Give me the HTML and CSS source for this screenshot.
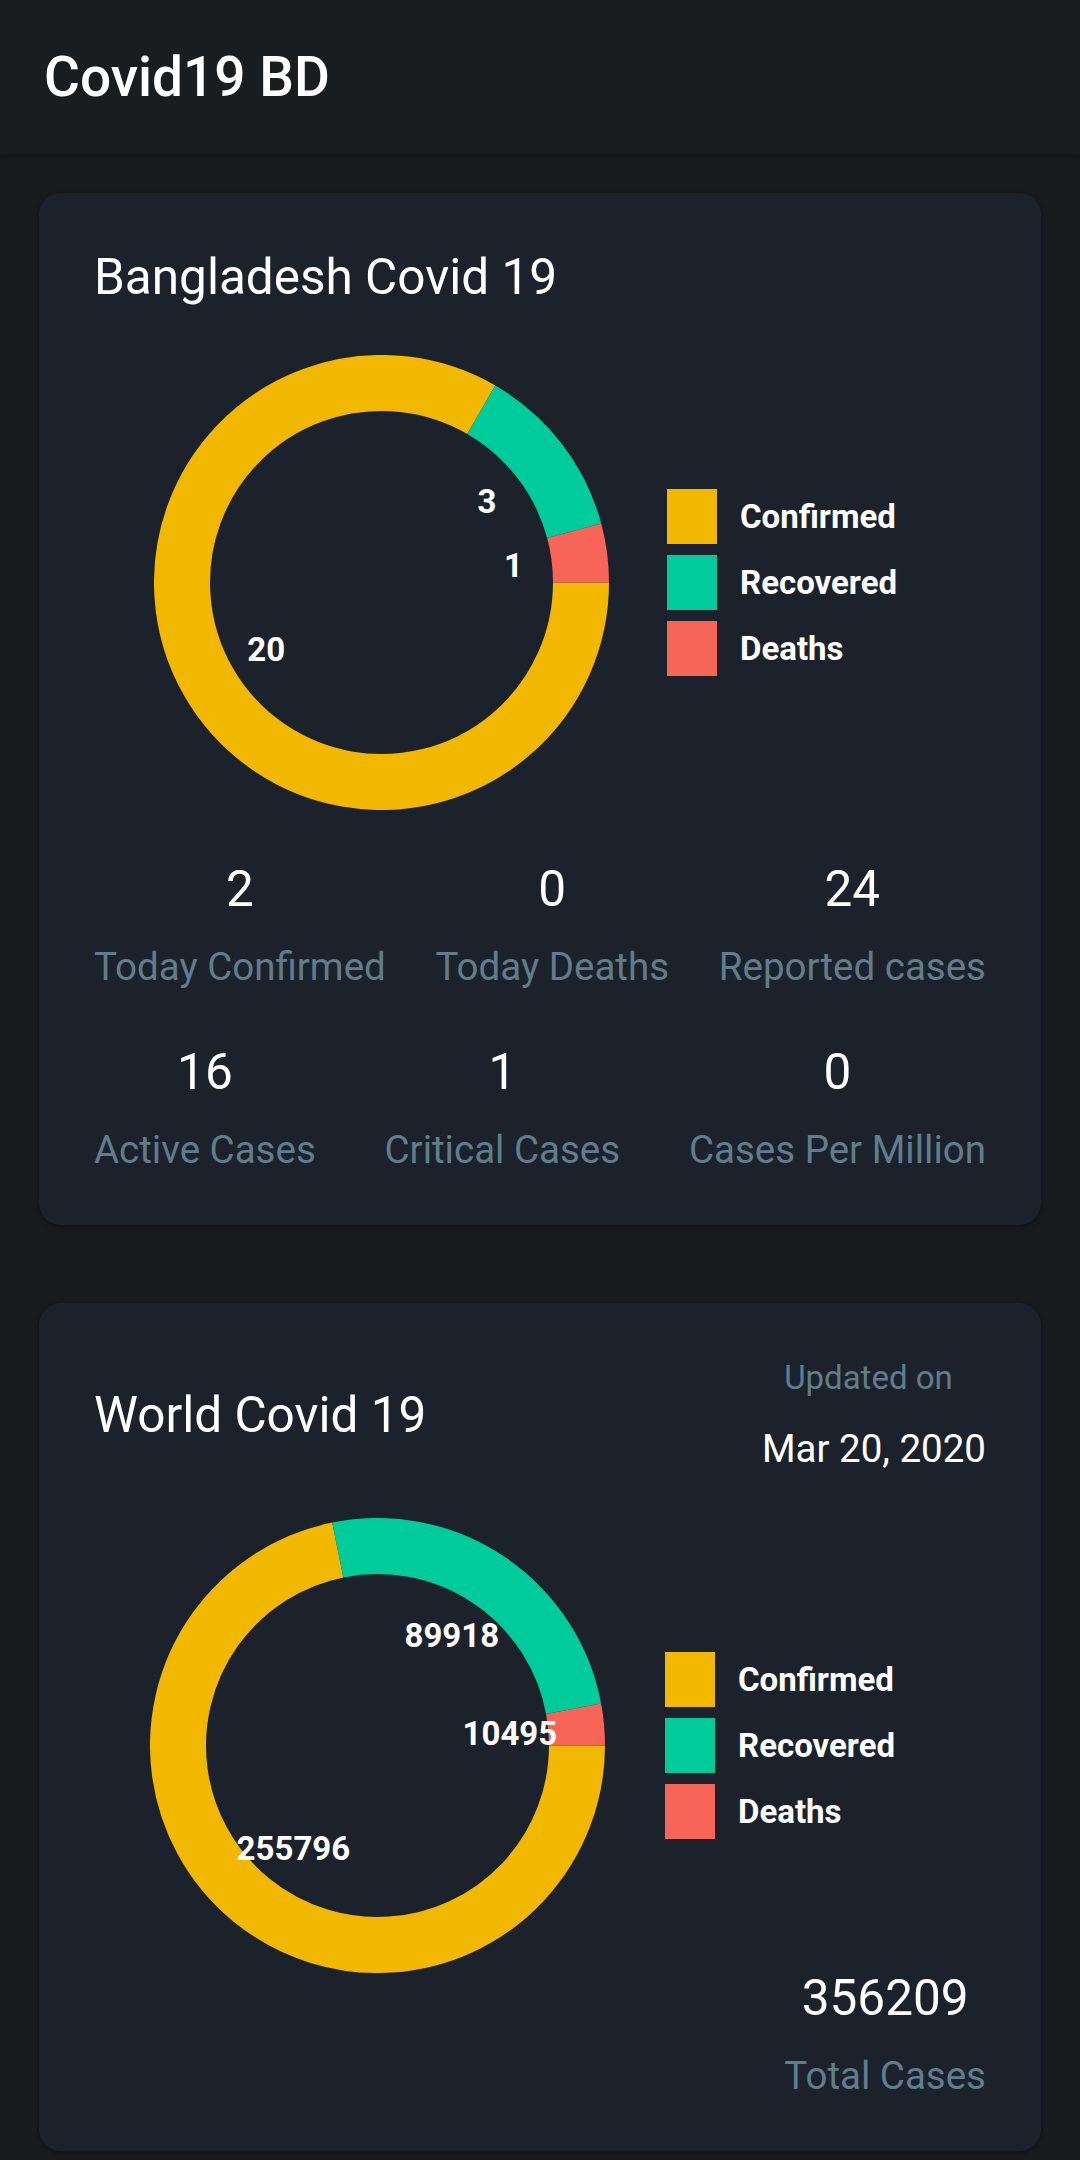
FILE: index.html
```html
<!DOCTYPE html>
<html lang="en">
<head>
<meta charset="utf-8">
<title>Covid19 BD</title>
<link rel="stylesheet" href="styles.css">
</head>
<body>
<header class="appbar">
  <h1 class="appbar-title">Covid19 BD</h1>
</header>
<main class="content">
  <section class="card">
    <h2 class="card-title">Bangladesh Covid 19</h2>
    <div class="chart-row">
      <svg class="donut" viewBox="0 0 455 455" width="455" height="455">
        <path class="seg seg-confirmed" d="M427 227.5 A199.5 199.5 0 1 1 327.25 54.73"/>
        <path class="seg seg-recovered" d="M327.25 54.73 A199.5 199.5 0 0 1 420.2 175.87"/>
        <path class="seg seg-deaths" d="M420.2 175.87 A199.5 199.5 0 0 1 427 227.5"/>
        <text class="seg-label" x="112.3" y="294">20</text>
        <text class="seg-label" x="333" y="146.5">3</text>
        <text class="seg-label" x="359.4" y="210.1">1</text>
      </svg>
      <ul class="legend">
        <li class="legend-item"><span class="swatch swatch-confirmed"></span>Confirmed</li>
        <li class="legend-item"><span class="swatch swatch-recovered"></span>Recovered</li>
        <li class="legend-item"><span class="swatch swatch-deaths"></span>Deaths</li>
      </ul>
    </div>
    <div class="stats">
      <div class="stat-row stat-row-first">
        <div class="stat"><span class="stat-value">2</span><span class="stat-label">Today Confirmed</span></div>
        <div class="stat"><span class="stat-value">0</span><span class="stat-label">Today Deaths</span></div>
        <div class="stat"><span class="stat-value">24</span><span class="stat-label">Reported cases</span></div>
      </div>
      <div class="stat-row">
        <div class="stat"><span class="stat-value">16</span><span class="stat-label">Active Cases</span></div>
        <div class="stat"><span class="stat-value">1</span><span class="stat-label">Critical Cases</span></div>
        <div class="stat"><span class="stat-value">0</span><span class="stat-label">Cases Per Million</span></div>
      </div>
    </div>
  </section>

  <section class="card">
    <div class="card-head">
      <h2 class="card-title">World Covid 19</h2>
      <div class="updated">
        <span class="updated-label">Updated on</span>
        <span class="updated-date">Mar 20, 2020</span>
      </div>
    </div>
    <div class="chart-row chart-row-world">
      <svg class="donut" viewBox="0 0 455 455" width="455" height="455">
        <path class="seg seg-confirmed" d="M427 227.5 A199.5 199.5 0 1 1 187.78 31.99"/>
        <path class="seg seg-recovered" d="M187.78 31.99 A199.5 199.5 0 0 1 423.59 190.77"/>
        <path class="seg seg-deaths" d="M423.59 190.77 A199.5 199.5 0 0 1 427 227.5"/>
        <text class="seg-label" x="143.4" y="330.5">255796</text>
        <text class="seg-label" x="301.8" y="117.2">89918</text>
        <text class="seg-label" x="359.9" y="215.2">10495</text>
      </svg>
      <ul class="legend">
        <li class="legend-item"><span class="swatch swatch-confirmed"></span>Confirmed</li>
        <li class="legend-item"><span class="swatch swatch-recovered"></span>Recovered</li>
        <li class="legend-item"><span class="swatch swatch-deaths"></span>Deaths</li>
      </ul>
    </div>
    <div class="total">
      <span class="stat-value">356209</span>
      <span class="stat-label">Total Cases</span>
    </div>
  </section>
</main>
</body>
</html>
```
FILE: styles.css
```css
* {
  box-sizing: border-box;
}

html, body {
  margin: 0;
  padding: 0;
}

body {
  background: #181b1e;
  color: #ffffff;
  font-family: Roboto, "Noto Sans", "Liberation Sans", sans-serif;
  width: 1080px;
  min-height: 2160px;
}

.appbar {
  height: 154px;
  background: #1a1d20;
  display: flex;
  align-items: center;
  padding-left: 44px;
  box-shadow: 0 2px 4px rgba(0, 0, 0, 0.25);
  position: relative;
}

.appbar-title {
  margin: 0;
  font-size: 55px;
  font-weight: 500;
  line-height: 64px;
  color: #ffffff;
}

.content {
  padding: 39px 39px 0 39px;
  display: flex;
  flex-direction: column;
  gap: 78px;
}

.card {
  background: #1c222b;
  border-radius: 22px;
  padding: 55px 55px 53px 55px;
  box-shadow: 0 2px 5px rgba(0, 0, 0, 0.35);
  display: flex;
  flex-direction: column;
}

.card-title {
  margin: 0;
  font-size: 49.5px;
  font-weight: 400;
  line-height: 58px;
  color: #ffffff;
}

.chart-row {
  display: flex;
  align-items: center;
  margin-top: 49px;
}

.donut {
  display: block;
  flex: none;
  margin-left: 60px;
}

.chart-row-world {
  margin-top: 47px;
}

.chart-row-world .donut {
  margin-left: 56px;
}

.seg {
  fill: none;
  stroke-width: 56;
}

.seg-confirmed { stroke: #f2b800; }
.seg-recovered { stroke: #00cb9a; }
.seg-deaths { stroke: #f66557; }

.seg-label {
  fill: #ffffff;
  font-family: Roboto, "Noto Sans", "Liberation Sans", sans-serif;
  font-weight: 700;
  font-size: 33px;
  text-anchor: middle;
  dominant-baseline: central;
}

.legend {
  list-style: none;
  margin: 0 0 0 58px;
  padding: 0;
  display: flex;
  flex-direction: column;
  gap: 11px;
}

.chart-row-world .legend {
  margin-left: 60px;
}

.legend-item {
  display: flex;
  align-items: center;
  font-size: 33px;
  font-weight: 700;
  line-height: 55px;
  color: #ffffff;
}

.swatch {
  width: 50px;
  height: 55px;
  margin-right: 23px;
  flex: none;
}

.swatch-confirmed { background: #f2b800; }
.swatch-recovered { background: #00cb9a; }
.swatch-deaths { background: #f66557; }

.stats {
  margin-top: 50px;
  display: flex;
  flex-direction: column;
  gap: 54px;
}

.stat-row {
  display: flex;
  justify-content: space-between;
}

.stat {
  display: flex;
  flex-direction: column;
  align-items: center;
  gap: 26px;
}

.stat-value {
  font-size: 49.5px;
  line-height: 58px;
  font-weight: 400;
  color: #ffffff;
}

.stat-label {
  font-size: 38.5px;
  line-height: 45px;
  font-weight: 400;
  color: #607d8b;
}

.card-head {
  display: flex;
  justify-content: space-between;
  align-items: center;
}

.updated {
  display: flex;
  flex-direction: column;
  align-items: center;
  gap: 29px;
}

.updated-label {
  font-size: 33px;
  line-height: 39px;
  color: #607d8b;
  margin-right: 11px;
}

.updated-date {
  font-size: 38.5px;
  line-height: 45px;
  color: #ffffff;
}

.total {
  align-self: flex-end;
  display: flex;
  flex-direction: column;
  align-items: center;
  gap: 26px;
  margin-top: -4px;
}
```
